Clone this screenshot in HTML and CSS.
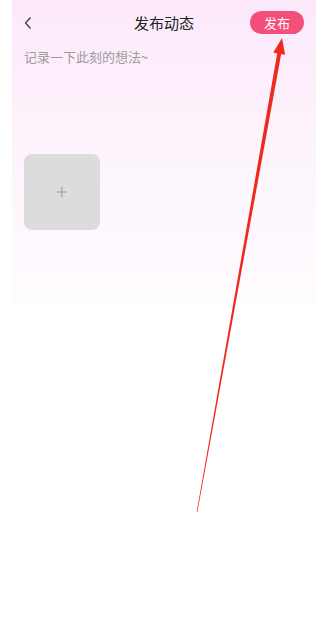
FILE: index.html
```html
<!DOCTYPE html>
<html lang="zh-CN">
<head>
  <meta charset="UTF-8">
  <title>发布动态</title>
  <link rel="stylesheet" href="styles.css">
</head>
<body>

<div class="page">
  <div class="panel">
    <!-- Header -->
    <div class="header">
      <span class="back">
        <svg width="10" height="14" viewBox="0 0 10 14">
          <path d="M6.5 1.5 L1.5 7 L6.5 12.5" stroke="#333" stroke-width="1.2" fill="none"/>
        </svg>
      </span>
      <h1 class="title">发布动态</h1>
      <button class="publish">发布</button>
    </div>

    <!-- Editor -->
    <div class="editor">
      <p class="placeholder">记录一下此刻的想法~</p>
      <div class="add-box">
        <svg width="12" height="12" viewBox="0 0 12 12">
          <path d="M6 1 V11 M1 6 H11" stroke="#9a9a9a" stroke-width="1"/>
        </svg>
      </div>
    </div>
  </div>
</div>

<!-- annotation arrow -->
<svg class="arrow" width="325" height="633" viewBox="0 0 325 633">
  <polygon points="282,38 285.1,54.8 281.2,54.1 197.4,512 196.7,512 277.2,53.4 273.3,52.6" fill="#ee2a1f"/>
</svg>

</body>
</html>
```

FILE: styles.css
```css
body {
  font-family: "Noto Sans CJK SC", "Noto Sans", sans-serif;
  margin: 0;
  background: #fff;
  width: 325px;
  height: 633px;
  position: relative;
  overflow: hidden;
}
.page {
  padding: 0 9px 0 12px;
}
.panel {
  height: 303px;
  background: linear-gradient(to bottom, #fce9fa, #fdf5fd 55%, #fffcff);
  padding: 0 12px;
}
.header {
  height: 44px;
  display: flex;
  align-items: center;
  justify-content: space-between;
}
.back {
  width: 54px;
  display: flex;
  align-items: center;
  margin-top: 2px;
}
.title {
  margin: 0;
  font-size: 15px;
  font-weight: normal;
  color: #222;
}
.publish {
  width: 54px;
  height: 23px;
  padding: 0;
  border: none;
  border-radius: 12px;
  background: #f44f7b;
  color: #fff;
  font-family: inherit;
  font-size: 13px;
  line-height: 23px;
}
.editor {
  padding-top: 3px;
}
.placeholder {
  margin: 0;
  font-size: 13px;
  line-height: 20px;
  color: #9b9b9b;
}
.add-box {
  margin-top: 87px;
  width: 76px;
  height: 76px;
  border-radius: 8px;
  background: #dcdcdc;
  display: flex;
  align-items: center;
  justify-content: center;
}
.arrow {
  position: absolute;
  left: 0;
  top: 0;
}
```
